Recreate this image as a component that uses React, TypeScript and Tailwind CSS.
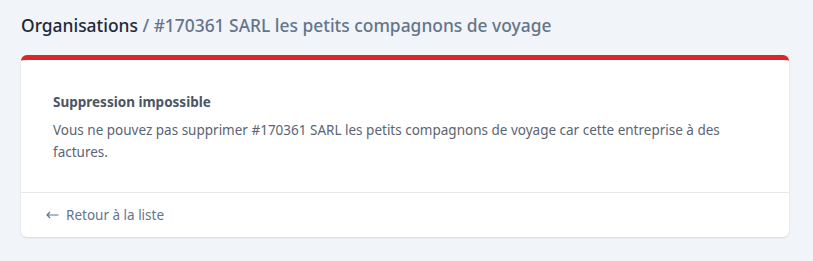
import React from "react";

export default function App() {
  return (
    <div
      className="min-h-[261px] bg-[#f1f4f9] pl-[21px] pr-[24px] pt-[13px] pb-6"
      style={{ fontFamily: '"Noto Sans", sans-serif' }}
    >
      <h1 className="text-[17.4px] leading-[24px] font-medium text-[#64748b]">
        <span className="text-[#1f2937]">Organisations</span> / #170361 SARL les petits compagnons de voyage
      </h1>

      <div className="mt-[18px] overflow-hidden rounded-md border-t-[5px] border-[#dc2626] bg-white shadow-[0_1px_2px_rgba(0,0,0,0.12)]">
        <div className="px-8 pt-8 pb-[29px]">
          <h2 className="text-[13.5px] leading-5 font-bold text-[#4b5563]">Suppression impossible</h2>
          <p className="mt-[7px] text-[13.5px] leading-[22px] text-[#5b6472]">
            Vous ne pouvez pas supprimer #170361 SARL les petits compagnons de voyage car cette entreprise à des
            factures.
          </p>
        </div>
        <div className="flex items-center border-t border-[#e5e7eb] px-[25px] py-[11px] text-[13.5px] leading-[22px]">
          <a href="#" className="flex items-center gap-[7px] text-[#64748b]">
            <svg width="13" height="8" viewBox="0 0 13 8" fill="none" stroke="currentColor" strokeWidth="1.2">
              <path d="M12.5 4H1M4 1L1 4l3 3" />
            </svg>
            Retour à la liste
          </a>
        </div>
      </div>
    </div>
  );
}
